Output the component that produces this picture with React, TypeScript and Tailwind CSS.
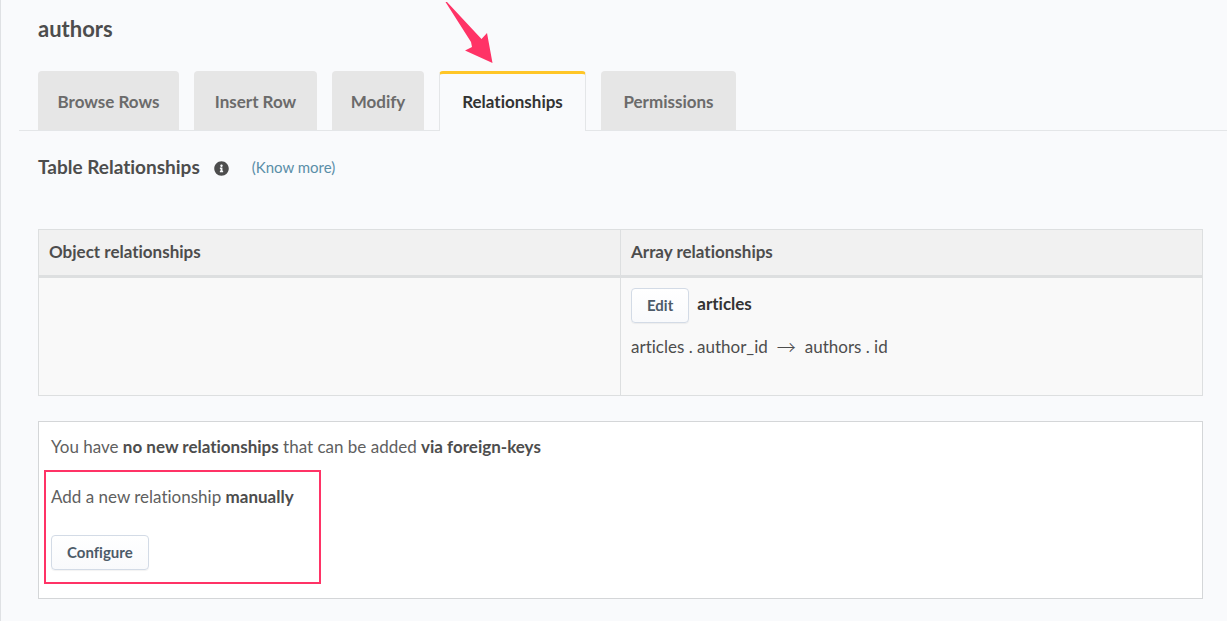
import React from "react";
import { FaInfoCircle } from "react-icons/fa";

const tabs = [
  { label: "Browse Rows", href: "#browse", width: "w-[141px]" },
  { label: "Insert Row", href: "#insert", width: "w-[123px]" },
  { label: "Modify", href: "#modify", width: "w-[92px]" },
  { label: "Relationships", href: "#relationships", width: "w-[147px]" },
  { label: "Permissions", href: "#permissions", width: "w-[135px]" },
];
const activeTab = "Relationships";

function Button({ children }: { children: React.ReactNode }) {
  return (
    <button
      type="button"
      className="block h-[35px] rounded-[4px] border border-[#d3dbe6] bg-linear-to-b from-white to-[#f9fafc] px-[15px] pb-[2px] text-[15px] font-bold text-[#4d5b69] shadow-[0_1px_1px_rgba(0,0,0,0.05)]"
    >
      {children}
    </button>
  );
}

function PointerArrow() {
  return (
    <svg
      viewBox="0 0 50 62"
      className="pointer-events-none absolute -top-[69px] left-[6px] h-[62px] w-[50px]"
      fill="#ff3366"
      aria-hidden="true"
    >
      <path d="M0.500 0 L2 0 L36.500 37 L42 31 L47.500 61 L20 48.500 L27 45 L26 40 Z" />
    </svg>
  );
}

export default function App() {
  return (
    <main className="min-h-screen border-l border-[#dfe1e4] bg-[#f9fafc] font-['Lato','Noto_Sans',sans-serif] text-[17px] leading-6 text-[#4d4d4d] [font-variant-ligatures:none]">
      <h1 className="px-[37px] pt-[15px] text-[22px] leading-7 font-bold">authors</h1>

      <nav className="mt-7 ml-[18px] border-b border-[#e4e6e8] pl-[19px]">
        <ul className="-mb-px flex gap-[15px] text-center">
          {tabs.map((tab) => (
            <li key={tab.label} className={`relative ${tab.width}`}>
              {tab.label === activeTab ? (
                <>
                  <a
                    href={tab.href}
                    aria-current="page"
                    className="block h-[60px] rounded-t-[4px] border-x border-t-[3px] border-x-[#e4e6e8] border-t-[#ffc627] bg-[#f9fafc] pt-4 font-bold text-[#333333]"
                  >
                    {tab.label}
                  </a>
                  <PointerArrow />
                </>
              ) : (
                <a href={tab.href} className="block h-[59px] rounded-t-[4px] bg-[#e6e6e6] pt-[19px] font-bold text-[#6b6b6b]">
                  {tab.label}
                </a>
              )}
            </li>
          ))}
        </ul>
      </nav>

      <div className="px-[37px] pr-6 pb-5">
        <div className="flex items-center pt-6">
          <h2 className="text-[19px] font-bold">Table Relationships</h2>
          <FaInfoCircle className="mt-[2px] ml-[14px] size-[15px]" role="img" aria-label="Info" />
          <a href="#docs" className="ml-[23px] text-[15px] text-[#5a8ea8]">
            (Know more)
          </a>
        </div>

        <table className="mt-[50px] w-full table-fixed border-collapse border border-[#dddfe0]">
          <thead>
            <tr className="bg-[#f1f1f1] text-left align-top">
              <th scope="col" className="h-[47px] border border-b-[3px] border-[#dddfe0] px-[10px] pt-[10px] font-bold">
                Object relationships
              </th>
              <th scope="col" className="border border-b-[3px] border-[#dddfe0] px-[10px] pt-[10px] font-bold">
                Array relationships
              </th>
            </tr>
          </thead>
          <tbody>
            <tr className="bg-[#f9f9f9] align-top">
              <td className="border border-[#dddfe0]" />
              <td className="h-[119px] border border-[#dddfe0] px-[10px] pt-[10px]">
                <div className="flex items-start gap-2">
                  <Button>Edit</Button>
                  <b className="leading-8 text-[#333333]">articles</b>
                </div>
                <div className="mt-3 flex">
                  <span>articles . author_id</span>
                  <span className="mx-[9px] font-['Noto_Sans_CJK_JP',sans-serif] text-[19px] font-light">→</span>
                  <span>authors . id</span>
                </div>
              </td>
            </tr>
          </tbody>
        </table>

        <section className="mt-[25px] h-[178px] border border-[#d4d6d8] bg-white px-[5px] pt-[13px]">
          <p className="px-[7px] text-[#606060]">
            You have <b className="text-[#4d4d4d]">no new relationships</b> that can be added{" "}
            <b className="text-[#4d4d4d]">via foreign-keys</b>
          </p>
          <div className="mt-[11px] h-[114px] w-[277px] border-2 border-[#ff3366] px-[5px] pt-[13px]">
            <p className="text-[#606060]">
              Add a new relationship <b className="text-[#4d4d4d]">manually</b>
            </p>
            <div className="mt-[26px]">
              <Button>Configure</Button>
            </div>
          </div>
        </section>
      </div>
    </main>
  );
}
